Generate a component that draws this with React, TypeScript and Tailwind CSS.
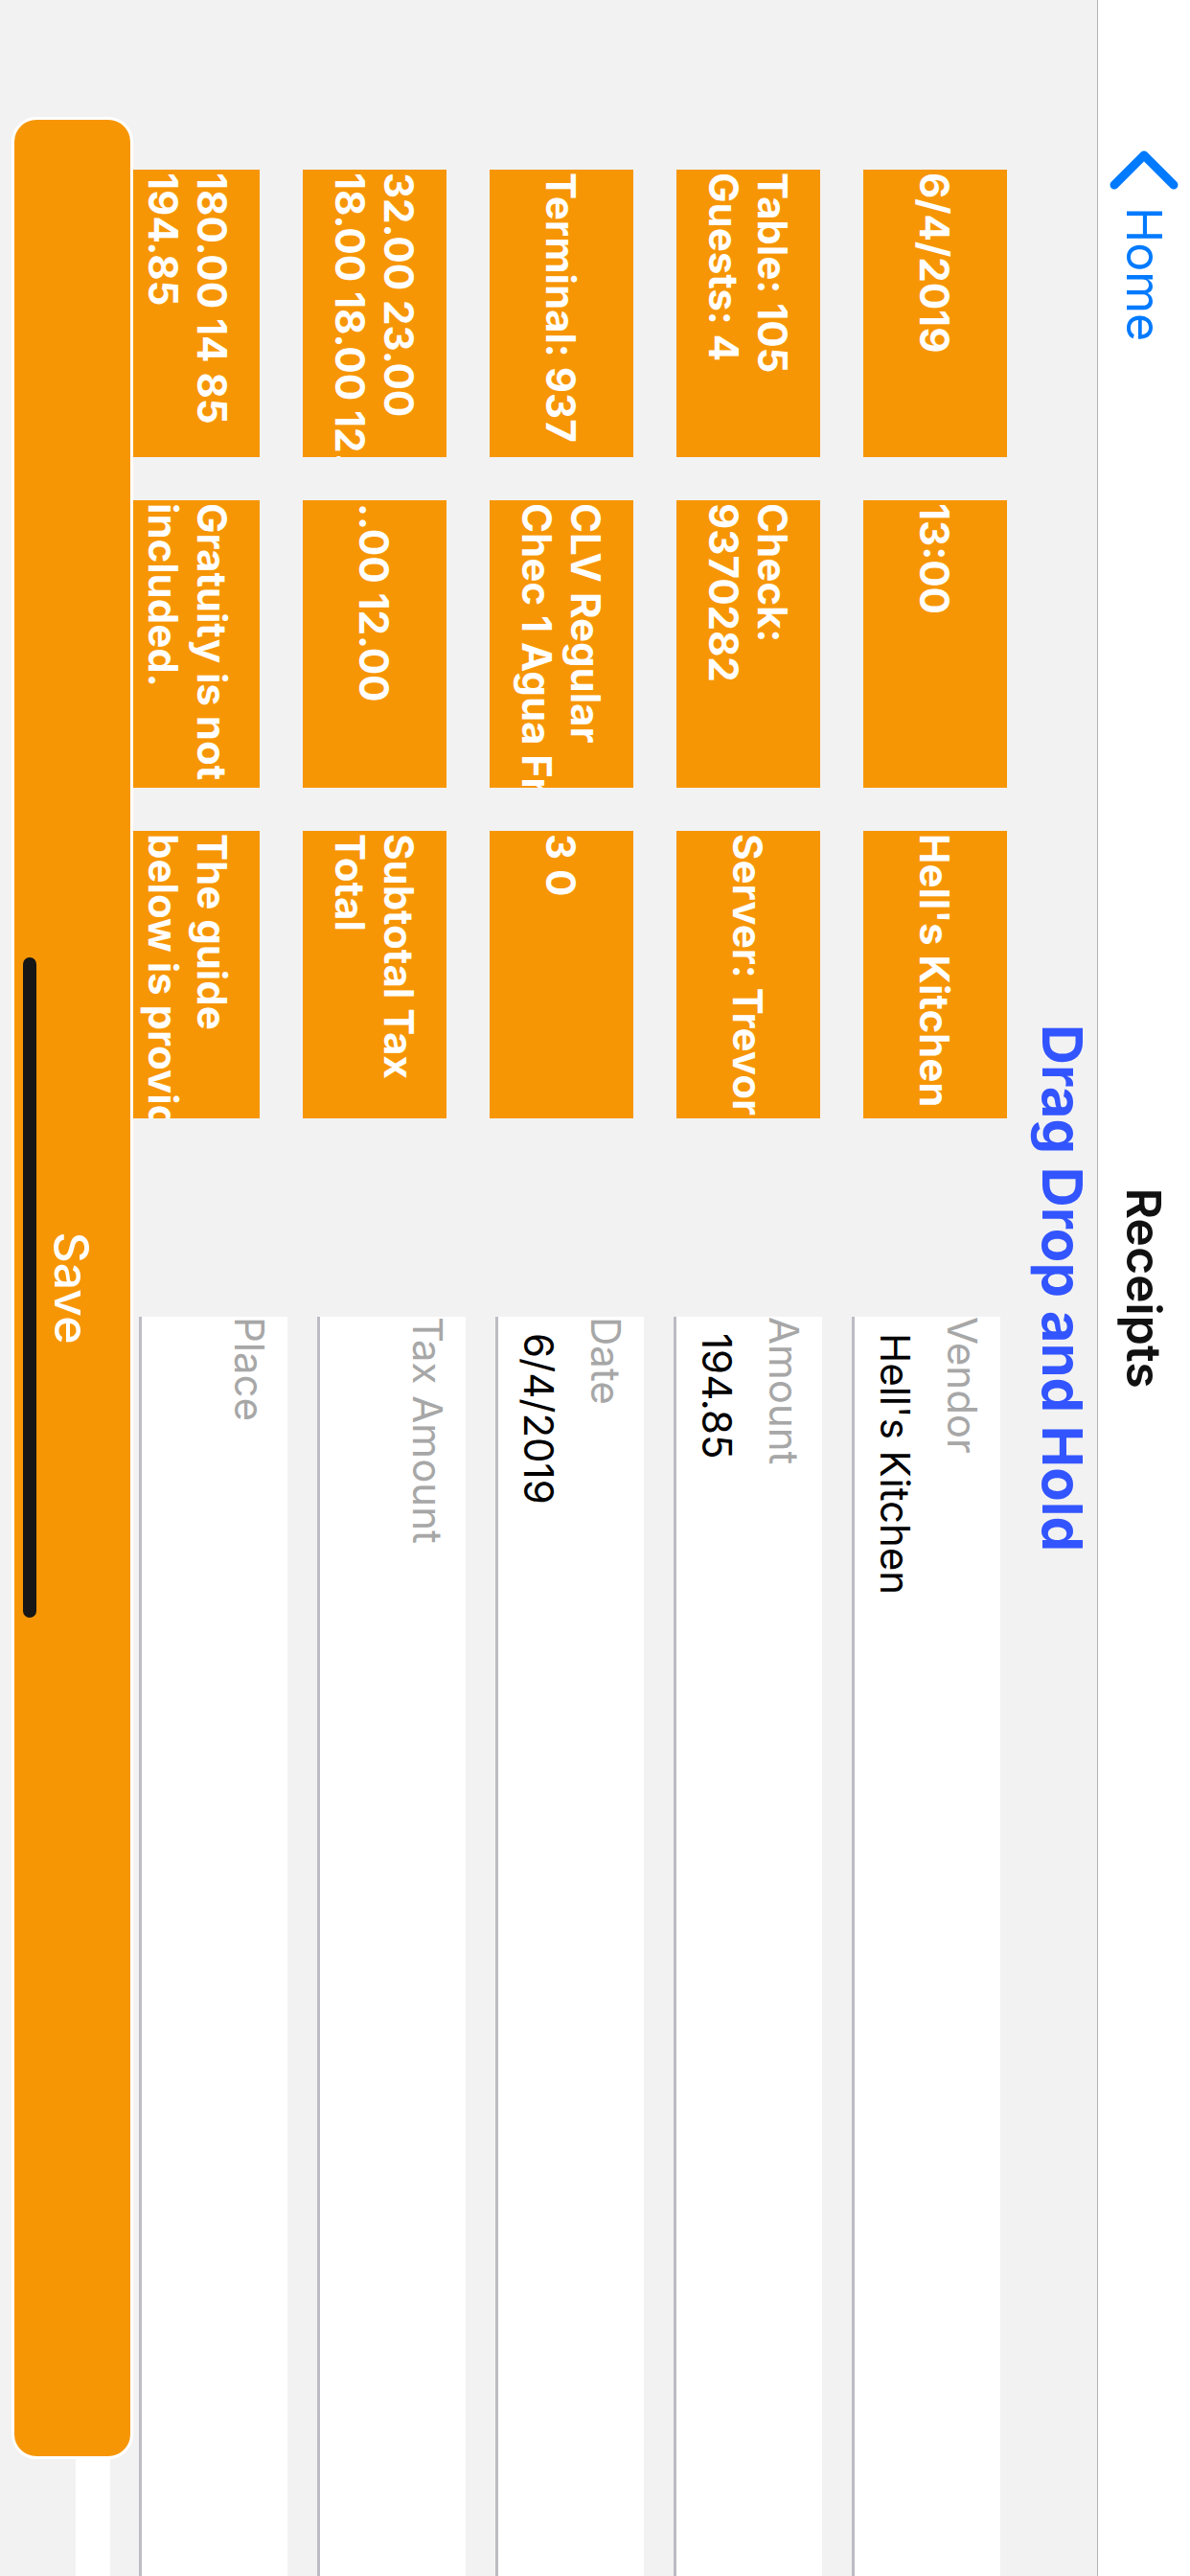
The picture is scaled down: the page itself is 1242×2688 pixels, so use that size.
import React from "react";

const tiles: string[][] = [
  ["6/4/2019"],
  ["13:00"],
  ["Hell's Kitchen"],
  ["Table: 105", "Guests: 4"],
  ["Check:", "9370282"],
  ["Server: Trevor"],
  ["Terminal: 937"],
  ["CLV Regular", "Chec 1 Agua Fresca"],
  ["3 0"],
  ["32.00 23.00", "18.00 18.00 12.00"],
  ["..00 12.00"],
  ["Subtotal Tax", "Total"],
  ["180.00 14 85", "194.85"],
  ["Gratuity is not", "included."],
  ["The guide", "below is provided"],
];

const fields: { label: string; value: string }[] = [
  { label: "Vendor", value: "Hell's Kitchen" },
  { label: "Amount", value: "194.85" },
  { label: "Date", value: "6/4/2019" },
  { label: "Tax Amount", value: "" },
  { label: "Place", value: "" },
];

export default function App() {
  return (
    <div className="w-[1242px] h-[2688px] overflow-hidden bg-[#f2f2f2]">
      <div
        className="relative w-[2688px] h-[1242px] origin-top-left [transform:translateX(1242px)_rotate(90deg)] bg-[#f2f2f2] flex flex-col"
        style={{ fontFamily: "Inter, 'Noto Sans', sans-serif" }}
      >
        {/* Nav bar */}
        <div className="h-[97px] shrink-0 bg-white border-b border-[#b2b2b2] grid grid-cols-[1fr_auto_1fr] items-center">
          <div className="flex items-center pl-[152px]">
            <svg width="50" height="72" viewBox="0 0 50 72" fill="none">
              <path
                d="M41 5 L10 36 L41 67"
                stroke="#007aff"
                strokeWidth="9"
                strokeLinecap="round"
                strokeLinejoin="round"
              />
            </svg>
            <span className="ml-[14px] text-[50px] leading-none text-[#007aff]">Home</span>
          </div>
          <div className="text-[50px] leading-none font-semibold text-[#111111]">Receipts</div>
          <div />
        </div>

        {/* Title */}
        <div className="mt-[7px] text-center text-[58px] leading-none font-bold text-[#3355ff]">
          Drag Drop and Hold
        </div>

        {/* Content */}
        <div className="mt-[29px] flex items-start">
          <div className="ml-[177px] grid grid-cols-[300px_300px_300px] gap-x-[45px] gap-y-[45px] shrink-0">
            {tiles.map((lines, i) => (
              <div
                key={i}
                className="h-[150px] bg-[#f79605] overflow-hidden flex flex-col justify-center pl-[3px] text-white font-bold text-[42px] leading-[51px]"
              >
                {lines.map((l, j) => (
                  <div key={j} className="whitespace-nowrap">
                    {l}
                  </div>
                ))}
              </div>
            ))}
          </div>

          <div className="ml-[207px] mt-[7px] flex-1 flex flex-col gap-[31px]">
            {fields.map((f) => (
              <div
                key={f.label}
                className="h-[155px] bg-white border-b-[3px] border-[#bcbcc3] pt-[19px]"
              >
                <div className="text-[42px] leading-none text-[#a7a7a7]">{f.label}</div>
                {f.value ? (
                  <div className="mt-[28px] pl-[17px] text-[42px] leading-none text-black">{f.value}</div>
                ) : null}
              </div>
            ))}
            <div className="h-[36px] bg-white -mt-[1px]" />
          </div>
        </div>

        {/* Save button */}
        <div className="absolute left-[122px] top-[1103px] w-[2444px] h-[127px] rounded-[26px] border-[3px] border-white bg-[#f79605] flex items-center justify-center">
          <span className="text-[50px] leading-none font-medium text-white">Save</span>
        </div>

        {/* Home indicator */}
        <div className="absolute left-[999px] top-[1204px] w-[689px] h-[14px] rounded-full bg-[#161616]" />
      </div>
    </div>
  );
}
